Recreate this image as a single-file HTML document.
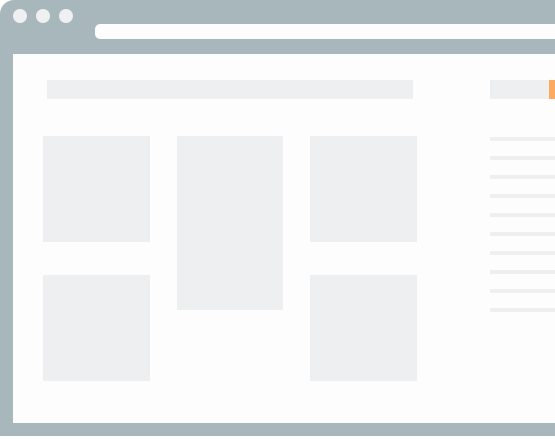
<!DOCTYPE html>
<html><head><style>
body{margin:0;width:555px;height:439px;background:#fff;position:relative;overflow:hidden}
div{position:absolute}
.f{left:0;top:0;width:575px;height:436px;background:#a8b7bc;border-radius:14px 0 0 0}
.in{left:13px;top:54px;width:560px;height:369px;background:#fdfdfd}
.d{width:14px;height:14px;border-radius:50%;background:#eef0f2;top:9px}
.u{left:95px;top:24px;width:480px;height:15px;background:#fdfdfd;border-radius:5px}
.b{background:#eeeff1}
.l{left:490px;width:70px;height:4px;background:#eeeff1}
</style></head><body>
<div class="f"></div>
<div class="d" style="left:13px"></div><div class="d" style="left:36px"></div><div class="d" style="left:59px"></div>
<div class="u"></div>
<div class="in"></div>
<div class="b" style="left:47px;top:80px;width:366px;height:19px"></div>
<div class="b" style="left:490px;top:80px;width:59px;height:19px"></div>
<div style="left:549px;top:80px;width:6px;height:19px;background:#fcaa62"></div>
<div class="b" style="left:43px;top:136px;width:107px;height:106px"></div>
<div class="b" style="left:177px;top:136px;width:106px;height:174px"></div>
<div class="b" style="left:310px;top:136px;width:107px;height:106px"></div>
<div class="b" style="left:43px;top:275px;width:107px;height:106px"></div>
<div class="b" style="left:310px;top:275px;width:107px;height:106px"></div>
<div class="l" style="top:137px"></div><div class="l" style="top:156px"></div><div class="l" style="top:175px"></div><div class="l" style="top:194px"></div><div class="l" style="top:213px"></div><div class="l" style="top:232px"></div><div class="l" style="top:251px"></div><div class="l" style="top:270px"></div><div class="l" style="top:289px"></div><div class="l" style="top:308px"></div>
</body></html>
